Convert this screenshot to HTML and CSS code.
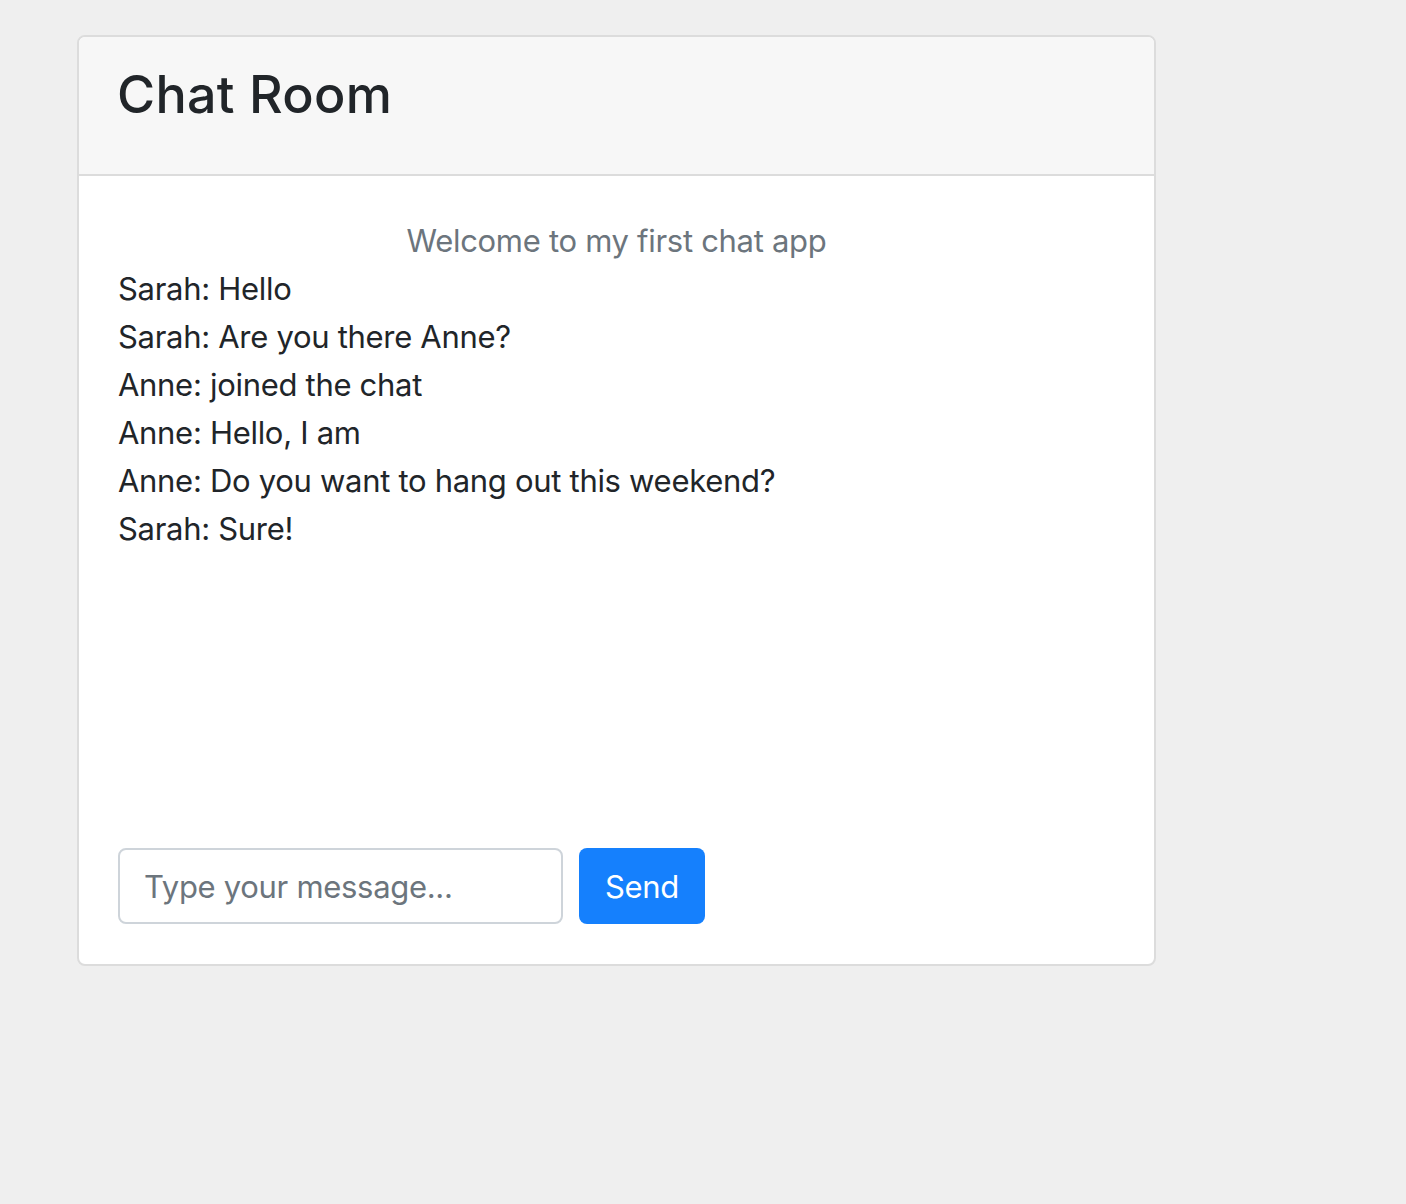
FILE: index.html
```html
<!DOCTYPE html>
<html lang="en">
<head>
<meta charset="utf-8">
<title>Chat Room</title>
<link rel="stylesheet" href="styles.css">
</head>
<body>
<div class="card">
  <div class="card-header">
    <h2 class="title">Chat Room</h2>
  </div>
  <div class="card-body">
    <div class="messages">
      <div class="welcome">Welcome to my first chat app</div>
      <div class="msg">Sarah: Hello</div>
      <div class="msg">Sarah: Are you there Anne?</div>
      <div class="msg">Anne: joined the chat</div>
      <div class="msg">Anne: Hello, I am</div>
      <div class="msg">Anne: Do you want to hang out this weekend?</div>
      <div class="msg">Sarah: Sure!</div>
    </div>
    <form class="composer">
      <input class="input" type="text" placeholder="Type your message...">
      <button class="send" type="button">Send</button>
    </form>
  </div>
</div>
</body>
</html>
```

FILE: styles.css
```css
html, body {
  margin: 0;
  padding: 0;
}
body {
  background: #efefef;
  font-family: Inter, "Liberation Sans", sans-serif;
  color: #212529;
  font-size: 31px;
  line-height: 48px;
  letter-spacing: -0.3px;
  padding: 35px 0 0 77px;
}
.card {
  width: 1075px;
  background: #fff;
  border: 2px solid #dcdcdc;
  border-radius: 8px;
  overflow: hidden;
}
.card-header {
  background: #f7f7f7;
  border-bottom: 2px solid #dcdcdc;
  height: 139px;
  box-sizing: border-box;
  padding: 20px 40px 0 38px;
}
.title {
  margin: 0;
  font-size: 52px;
  font-weight: 500;
  line-height: 76px;
  letter-spacing: 0.3px;
}
.card-body {
  padding: 41px 40px 40px 39px;
}
.messages {
  height: 631px;
}
.welcome {
  text-align: center;
  color: #6c757d;
  padding-left: 1px;
}
.msg {
  color: #212529;
}
.composer {
  display: flex;
  gap: 16px;
  margin: 0;
}
.input {
  width: 445px;
  height: 76px;
  box-sizing: border-box;
  border: 2px solid #ced4da;
  border-radius: 8px;
  padding: 12px 24px;
  font-family: inherit;
  font-size: 31px;
  letter-spacing: -0.3px;
  color: #495057;
  background: #fff;
}
.input::placeholder {
  color: #6c757d;
}
.send {
  width: 126px;
  height: 76px;
  box-sizing: border-box;
  border: 0;
  border-radius: 8px;
  background: #1580fd;
  color: #fff;
  font-family: inherit;
  font-size: 31px;
  letter-spacing: -0.3px;
  padding: 0;
}
```
